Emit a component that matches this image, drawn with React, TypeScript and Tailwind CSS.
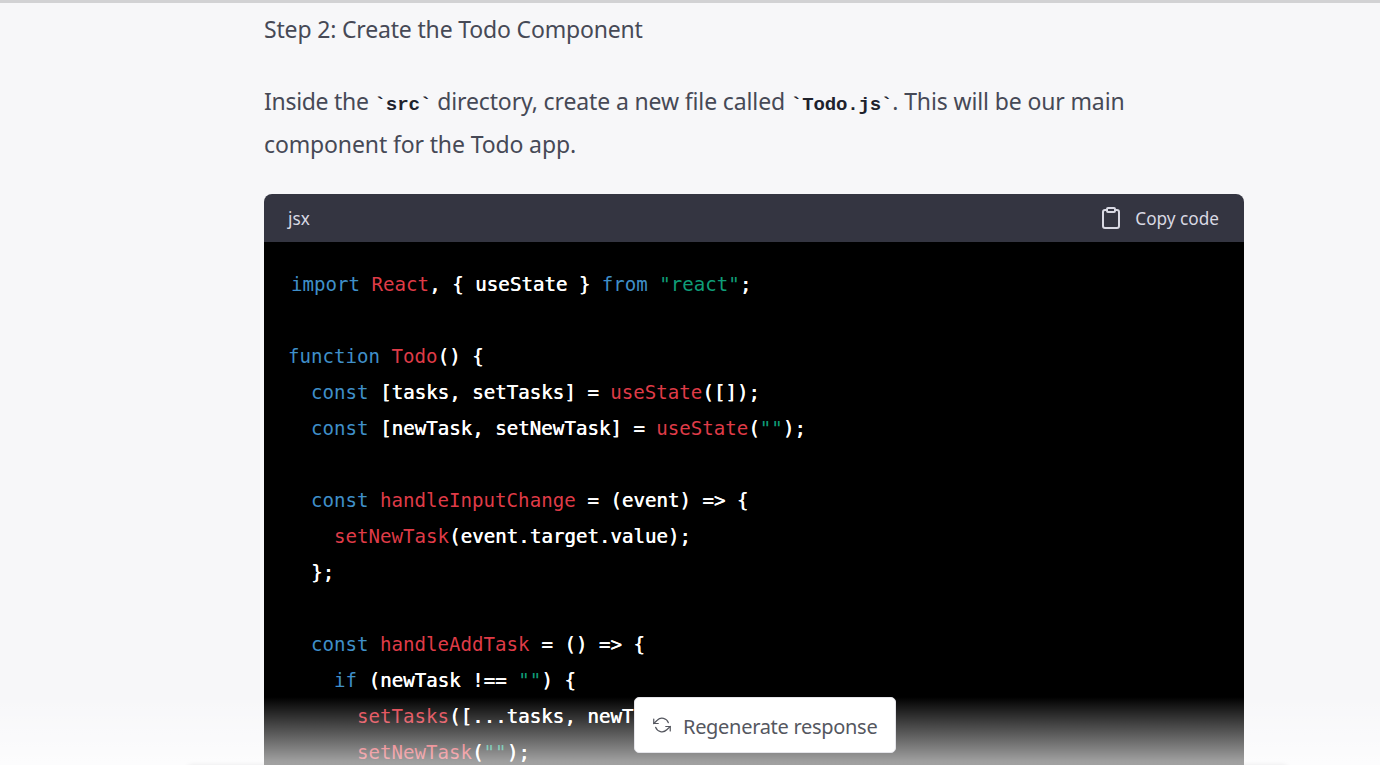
import React from "react";

const K = ({ children }: { children: React.ReactNode }) => <span className="text-[#3f8fc9] [text-shadow:none]">{children}</span>;
const R = ({ children }: { children: React.ReactNode }) => <span className="text-[#df3b47] [text-shadow:none]">{children}</span>;
const G = ({ children }: { children: React.ReactNode }) => <span className="text-[#0f9d78] [text-shadow:none]">{children}</span>;

function Line({ children }: { children?: React.ReactNode }) {
  return <div className="h-9 whitespace-pre leading-9">{children ?? " "}</div>;
}

export default function App() {
  return (
    <div className="relative h-[765px] w-[1380px] overflow-hidden bg-[#f7f7f9] font-['Noto_Sans',sans-serif] text-[#464956]">
      <div className="h-[3px] bg-[#d2d2d4]" />
      <div className="ml-[264px] w-[980px]">
        <p className="mt-[8px] h-9 text-[23px] leading-9 tracking-[-0.17px]">Step 2: Create the Todo Component</p>
        <p className="mt-[33px] text-[23px] leading-[43px] tracking-[-0.13px]">
          <span className="tracking-[-0.3px]">Inside the</span> <code className="font-['Liberation_Mono',monospace] text-[19.2px] leading-none font-bold text-[#20222c]">`src`</code> directory, create a new file called{" "}
          <code className="font-['Liberation_Mono',monospace] text-[19px] leading-none font-bold text-[#20222c]">`Todo.js`</code>. This will be our main
          <br />
          component for the Todo app.
        </p>
        <div className="mt-[28px] overflow-hidden rounded-t-[8px]">
          <div className="flex h-12 items-center justify-between bg-[#343541] pl-6 pr-[25px] pt-[1px] text-[17.2px] text-[#d9d9e3]">
            <span>jsx</span>
            <span className="flex items-center gap-[13px]">
              <svg width="22" height="24" viewBox="0 0 22 24" fill="none" stroke="currentColor" strokeWidth="2" strokeLinecap="round" strokeLinejoin="round">
                <path d="M15 4h2a2 2 0 0 1 2 2v14a2 2 0 0 1-2 2H5a2 2 0 0 1-2-2V6a2 2 0 0 1 2-2h2" />
                <rect x="7" y="2" width="8" height="4" rx="1" />
              </svg>
              Copy code
            </span>
          </div>
          <div className="h-[600px] bg-black pl-6 pt-[25px] font-['DejaVu_Sans_Mono',monospace] text-[19.13px] text-white [text-shadow:0.5px_0_0_#ffffff]">
            <Line><span className="pl-[3px]"><K>import</K> <R>React</R>, {"{"} useState {"}"} <K>from</K> <G>"react"</G>;</span></Line>
            <Line />
            <Line><K>function</K> <R>Todo</R>() {"{"}</Line>
            <Line>  <K>const</K> [tasks, setTasks] = <R>useState</R>([]);</Line>
            <Line>  <K>const</K> [newTask, setNewTask] = <R>useState</R>(<G>""</G>);</Line>
            <Line />
            <Line>  <K>const</K> <R>handleInputChange</R> = (event) =&gt; {"{"}</Line>
            <Line>    <R>setNewTask</R>(event.target.value);</Line>
            <Line>  {"};"}</Line>
            <Line />
            <Line>  <K>const</K> <R>handleAddTask</R> = () =&gt; {"{"}</Line>
            <Line>    <K>if</K> (newTask !== <G>""</G>) {"{"}</Line>
            <Line>      <R>setTasks</R>([...tasks, newTask]);</Line>
            <Line>      <R>setNewTask</R>(<G>""</G>);</Line>
          </div>
        </div>
      </div>
      <div className="absolute bottom-0 left-0 h-[68px] w-full bg-gradient-to-b from-white/0 to-white/[0.66]" />
      <div className="absolute left-[185px] right-[90px] top-[765px] h-4 rounded-full shadow-[0_0_5px_rgba(0,0,0,0.08)]" />
      <div className="absolute left-[634px] top-[697px] flex h-[56px] w-[262px] items-center gap-[12px] rounded-[5px] border border-[#e5e5ea] bg-white pl-[18px] text-[20px] tracking-[-0.3px] text-[#55575f]">
        <svg width="18" height="18" viewBox="0 0 24 24" fill="none" stroke="currentColor" strokeWidth="1.6" strokeLinecap="round" strokeLinejoin="round">
          <polyline points="1 4 1 10 7 10" />
          <polyline points="23 20 23 14 17 14" />
          <path d="M20.49 9A9 9 0 0 0 5.64 5.64L1 10m22 4l-4.64 4.36A9 9 0 0 1 3.51 15" />
        </svg>
        <span className="relative top-[2px]">Regenerate response</span>
      </div>
    </div>
  );
}
